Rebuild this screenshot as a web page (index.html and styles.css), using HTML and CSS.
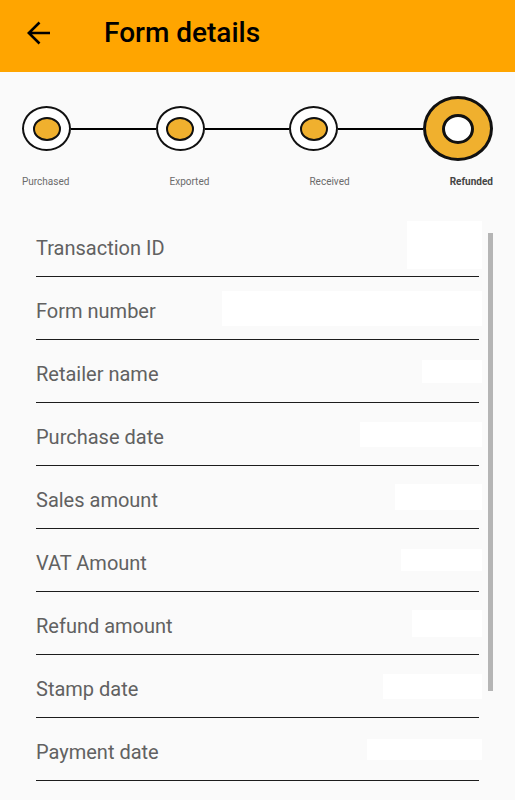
FILE: index.html
```html
<!DOCTYPE html>
<html lang="en">
<head>
    <meta charset="UTF-8">
    <meta name="viewport" content="width=device-width, initial-scale=1.0">
    <title>Form details</title>
    <link rel="stylesheet" href="styles.css">
</head>
<body>
    <!-- Top app bar -->
    <header class="app-bar">
        <svg class="back-icon" width="24" height="24" viewBox="0 0 24 24">
            <path d="M23 12H1.8M12.5 1.5L1.8 12l10.7 10.5" fill="none" stroke="#000" stroke-width="2.6"/>
        </svg>
        <h1 class="app-title">Form details</h1>
    </header>

    <!-- Status stepper -->
    <section class="stepper">
        <div class="step-track">
            <div class="step-dot"><span class="step-core"></span></div>
            <div class="step-line"></div>
            <div class="step-dot"><span class="step-core"></span></div>
            <div class="step-line"></div>
            <div class="step-dot"><span class="step-core"></span></div>
            <div class="step-line"></div>
            <div class="step-dot current"><span class="step-core"></span></div>
        </div>
        <div class="step-labels">
            <span>Purchased</span>
            <span>Exported</span>
            <span>Received</span>
            <span class="active">Refunded</span>
        </div>
    </section>

    <!-- Detail rows -->
    <section class="details">
        <div class="row">
            <span class="row-label">Transaction ID</span>
            <span class="row-value" style="width: 75px; height: 48px;"></span>
        </div>
        <div class="row">
            <span class="row-label">Form number</span>
            <span class="row-value" style="width: 260px; height: 35px;"></span>
        </div>
        <div class="row">
            <span class="row-label">Retailer name</span>
            <span class="row-value" style="width: 60px; height: 23px;"></span>
        </div>
        <div class="row">
            <span class="row-label">Purchase date</span>
            <span class="row-value" style="width: 122px; height: 25px;"></span>
        </div>
        <div class="row">
            <span class="row-label">Sales amount</span>
            <span class="row-value" style="width: 87px; height: 26px;"></span>
        </div>
        <div class="row">
            <span class="row-label">VAT Amount</span>
            <span class="row-value" style="width: 81px; height: 22px;"></span>
        </div>
        <div class="row">
            <span class="row-label">Refund amount</span>
            <span class="row-value" style="width: 70px; height: 27px;"></span>
        </div>
        <div class="row">
            <span class="row-label">Stamp date</span>
            <span class="row-value" style="width: 99px; height: 25px;"></span>
        </div>
        <div class="row">
            <span class="row-label">Payment date</span>
            <span class="row-value" style="width: 115px; height: 21px;"></span>
        </div>
        <div class="scroll-thumb"></div>
    </section>
</body>
</html>
```

FILE: styles.css
```css
body {
    margin: 0;
    font-family: Roboto, "Liberation Sans", sans-serif;
    background-color: #fafafa;
    overflow: hidden;
}

/* App bar */
.app-bar {
    display: flex;
    align-items: center;
    box-sizing: border-box;
    height: 72px;
    padding: 0 0 7px 27px;
    background-color: #ffa500;
}
.back-icon {
    flex-shrink: 0;
}
.app-title {
    margin: 0 0 0 53px;
    font-size: 28px;
    font-weight: 500;
    color: #000;
}

/* Stepper */
.stepper {
    padding: 24px 22px 0;
}
.step-track {
    display: flex;
    align-items: center;
}
.step-line {
    flex: 1;
    height: 2px;
    background-color: #000;
}
.step-dot {
    display: flex;
    align-items: center;
    justify-content: center;
    box-sizing: border-box;
    width: 49px;
    height: 45px;
    border: 2px solid #111;
    border-radius: 50%;
    background-color: #fff;
}
.step-core {
    box-sizing: border-box;
    width: 28px;
    height: 24px;
    border: 2px solid #111;
    border-radius: 50%;
    background-color: #f0b02e;
}
.step-dot.current {
    width: 70px;
    height: 65px;
    border-width: 3px;
    background-color: #f0b02e;
}
.step-dot.current .step-core {
    width: 32px;
    height: 30px;
    border-width: 3px;
    background-color: #fff;
}
.step-labels {
    display: flex;
    justify-content: space-between;
    margin-top: 15px;
    font-size: 10px;
    color: #6b6b6b;
}
.step-labels .active {
    font-weight: 700;
    color: #444;
}

/* Detail rows */
.details {
    position: relative;
    margin-top: 27px;
    padding: 0 36px;
}
.row {
    display: flex;
    align-items: center;
    height: 62px;
    border-bottom: 1px solid #1c1c1c;
}
.row-label {
    padding-top: 6px;
    font-size: 20px;
    color: #616161;
    white-space: nowrap;
}
.row-value {
    margin-left: auto;
    margin-right: -3px;
    background-color: #fff;
}
.scroll-thumb {
    position: absolute;
    top: 19px;
    right: 22px;
    width: 5px;
    height: 458px;
    background-color: #b5b5b5;
}
```
